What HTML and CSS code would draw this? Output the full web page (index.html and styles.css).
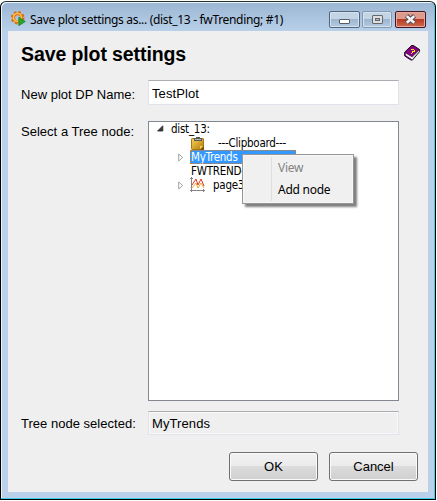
FILE: index.html
```html
<!DOCTYPE html>
<html lang="en">
<head>
<meta charset="utf-8">
<title>Save plot settings</title>
<link rel="stylesheet" href="styles.css">
</head>
<body>
<div class="window">
  <header class="titlebar">
    <svg class="app-icon" width="15" height="15" viewBox="0 0 15 15">
      <circle cx="6.7" cy="6.8" r="5.6" fill="none" stroke="#d9680c" stroke-width="2.4" stroke-dasharray="2.4 2"/>
      <circle cx="6.7" cy="6.8" r="4" fill="none" stroke="#e8780f" stroke-width="2.8"/>
      <circle cx="6.4" cy="6.4" r="4" fill="none" stroke="#ffc347" stroke-width="1.3"/>
      <path d="M7.8 6.2 14.3 10.5 7.8 14.7Z" fill="#25a52d" stroke="#147b20" stroke-width=".7"/>
    </svg>
    <span class="title">Save plot settings as... (dist_13 - fwTrending; #1)</span>
    <div class="controls">
      <span class="control">
        <svg width="29" height="15" viewBox="0 0 29 15"><rect x="9.5" y="7.5" width="10" height="4" rx=".5" fill="#fff" stroke="#555d69"/></svg>
      </span>
      <span class="control muted">
        <svg width="28" height="15" viewBox="0 0 28 15"><rect x="9.5" y="3.5" width="10" height="8" rx=".5" fill="#dedede" stroke="#626870"/><rect x="12.5" y="6.5" width="4" height="2" fill="#a3bbd2" stroke="#626870"/></svg>
      </span>
      <span class="control close">
        <svg width="29" height="15" viewBox="0 0 29 15"><path d="m10.5 3.8 8 7.2m0-7.2-8 7.2" stroke="#5b5058" stroke-width="4.6"/><path d="m10.8 4.1 7.4 6.6m0-6.6-7.4 6.6" stroke="#f5f5f5" stroke-width="2.6"/></svg>
      </span>
    </div>
  </header>
  <main class="panel">
    <div class="heading">
      <h1>Save plot settings</h1>
      <svg class="help" width="17" height="16" viewBox="0 0 17 16">
        <path d="M7.5.5h1.8l6.2 4v2.2L8.5 15H7L.7 11V7.2Z" fill="#f4f4f4" stroke="#111"/>
        <path d="M7.5.7h1.7l6 4L8 11.7 1 7.5Z" fill="#850084" stroke="#28002a" stroke-width=".7"/>
        <path d="M1 7.5v3l6.5 4.2" fill="none" stroke="#5d005d" stroke-width="1.3"/>
        <path d="m8.5 13 6-6.5" fill="none" stroke="#999" stroke-width=".6"/>
        <path d="M7 4h3v1h1v2H9v1H8V6h2V5H7ZM7 8h1v1H7Z" fill="#ffef00" shape-rendering="crispEdges"/>
      </svg>
    </div>
    <div class="form">
      <label class="label name-label">New plot DP Name:</label>
      <div class="field">TestPlot</div>
      <label class="label tree-label">Select a Tree node:</label>
      <div class="tree">
        <div class="node root">
          <svg class="arrow" width="7" height="7" viewBox="0 0 7 7"><path d="M5.8.8V6H.6Z" fill="#3c3c3c" stroke="#222" stroke-width=".8"/></svg>
          <span>dist_13:</span>
        </div>
        <div class="node">
          <svg class="clip" width="14" height="13" viewBox="0 0 14 13">
            <defs><linearGradient id="board" x2="1" y2="1"><stop stop-color="#f6d45c"/><stop offset="1" stop-color="#b57904"/></linearGradient></defs>
            <rect x=".5" y="1.5" width="12" height="11" rx=".7" fill="url(#board)" stroke="#a8740d"/>
            <path d="M3 1h2V0h4v1h2v3H3Z" fill="#575757"/><path d="M4 2h6v1H4Z" fill="#bbb"/>
            <path d="M13 9v4H9Z" fill="#7c5203"/><path d="M12 9 9 12V9Z" fill="#efd06c"/>
          </svg>
          <span>---Clipboard---</span>
        </div>
        <div class="node">
          <svg class="expander" width="6" height="9" viewBox="0 0 6 9"><path d="M.7 1v7l4-3.5Z" fill="#fff" stroke="#999" stroke-width=".9"/></svg>
          <span class="selected">MyTrends</span>
        </div>
        <div class="node"><span class="plain">FWTREND-</span></div>
        <div class="node">
          <svg class="expander" width="6" height="9" viewBox="0 0 6 9"><path d="M.7 1v7l4-3.5Z" fill="#fff" stroke="#999" stroke-width=".9"/></svg>
          <svg class="plot" width="16" height="16" viewBox="0 0 16 16" fill="none">
            <path d="M1.5 0v15M0 13.5h15M0 1.5h3M13.5 12v3" stroke="#858585"/>
            <path d="m2 11 4-5 2 5 3-5 3 5" stroke="#f2a83c"/>
            <path d="m2 8 4-6 2 6 3-6 3 7" stroke="#d8371e"/>
          </svg>
          <span>page3</span>
        </div>
        <div class="menu">
          <div class="item disabled">View</div>
          <div class="item">Add node</div>
        </div>
      </div>
      <label class="label selected-label">Tree node selected:</label>
      <div class="field readonly">MyTrends</div>
    </div>
    <footer class="actions">
      <button class="button">OK</button>
      <button class="button">Cancel</button>
    </footer>
  </main>
</div>
</body>
</html>
```

FILE: styles.css
```css
* { box-sizing: border-box; }
body {
  margin: 0;
  padding: 1px 1px 0 0;
  width: 437px;
  height: 501px;
  overflow: hidden;
  background: #fff;
  font-family: "Liberation Sans", sans-serif;
  color: #000;
}
.window {
  width: 436px;
  height: 499px;
  padding: 1px 6px 6px 7px;
  border: 1px solid #000;
  border-top-color: #263128;
  border-radius: 6px 6px 0 0;
  background: linear-gradient(#9bb6d3, #b9d1ea 30px);
  box-shadow: inset -1px -1px #3dcfe4, inset 1px 1px #edf5fc;
}
.titlebar { display: flex; height: 28px; padding-left: 3px; }
.app-icon { margin: 8px 4px 0 0; }
.title {
  margin-top: 8px;
  font: 12px/18px "Noto Sans", sans-serif;
  letter-spacing: -.32px;
  white-space: nowrap;
}
.controls { display: flex; gap: 2px; margin: 8px 3px 0 auto; }
.control {
  display: block;
  height: 17px;
  border: 1px solid #53657b;
  border-radius: 2px;
  background: linear-gradient(#c3d4e5 48%, #9db6cf 50%, #b4cbe2);
  box-shadow: inset 0 0 0 1px #d5e3f0;
}
.control svg { display: block; }
.control.muted { border-color: #8299b2; }
.control.close {
  margin-left: 1px;
  border-color: #431522;
  background: linear-gradient(#dd9b8d 45%, #b83a25 50%, #cf6b4c);
  box-shadow: inset 0 0 0 1px #e6aaa0;
}
.panel { width: 420px; height: 461px; background: #efefef; }
.heading { display: flex; justify-content: space-between; height: 49px; padding: 12px 7px 0 13px; }
h1 { margin: 0; font-size: 19.5px; line-height: 22px; letter-spacing: -.1px; white-space: nowrap; }
.help { margin-top: 2px; }
.form {
  display: grid;
  grid-template-columns: 127px 251px;
  grid-template-rows: 41px 290px 24px;
  padding-left: 13px;
}
.label { font-size: 13px; line-height: 16px; letter-spacing: .02px; white-space: nowrap; }
.name-label { padding-top: 7px; }
.tree-label { padding-top: 3px; }
.selected-label { padding-top: 5px; }
.field {
  height: 25px;
  padding-left: 3px;
  border: 1px solid #e2e3ea;
  border-top-color: #abadb3;
  background: #fff;
  font-size: 13px;
  letter-spacing: .1px;
  line-height: 25px;
}
.field.readonly { height: 24px; background: #efefef; line-height: 23px; box-shadow: inset 0 0 0 1px #f8f8f8; }
.tree {
  position: relative;
  height: 280px;
  border: 1px solid #828790;
  background: #fff;
  font: 11.5px/14px "DejaVu Sans Condensed", "DejaVu Sans", sans-serif;
  letter-spacing: -.25px;
  white-space: nowrap;
}
.node { display: flex; align-items: center; height: 14px; padding-left: 29px; }
.node.root { padding-left: 8px; }
.arrow { margin: 0 7px 1px 0; }
.clip { margin: 0 13px; }
.expander { margin-right: 6px; }
.plot { margin-right: 7px; }
.plain { margin-left: 13px; }
.selected { width: 106px; height: 14px; padding-left: 1px; background: #3399ff; color: #fff; outline: 1px dotted #d77a23; outline-offset: -1px; }
.menu {
  position: absolute;
  left: 93px;
  top: 32px;
  width: 112px;
  height: 50px;
  padding: 2px 0 2px 35px;
  border: 1px solid #979797;
  background: linear-gradient(#dfdfdf, #dfdfdf) 28px 2px / 1px 44px no-repeat, #f0f0f0;
  box-shadow: inset 0 0 0 1px #f6f6f6, 3px 3px 2px rgba(0, 0, 0, .5);
  font: 12px/22px "Noto Sans", sans-serif;
  letter-spacing: -.25px;
}
.item { height: 22px; }
.disabled { color: #838383; }
.actions { display: flex; gap: 11px; justify-content: flex-end; padding: 17px 10px 0 0; }
.button {
  width: 89px;
  height: 29px;
  padding: 0;
  border: 1px solid #707070;
  border-radius: 3px;
  background: linear-gradient(#f2f2f2, #ebebeb 48%, #dcdcdc 50%, #cfcfcf);
  box-shadow: inset 0 0 0 1px #fafafa;
  font: 13px "Liberation Sans", sans-serif;
  color: #000;
}
```
